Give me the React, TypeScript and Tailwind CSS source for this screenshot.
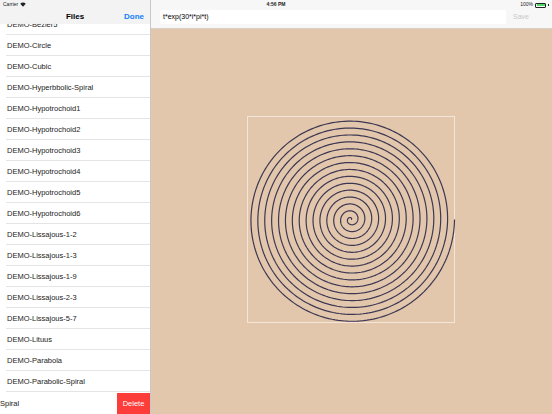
import React from "react";

const files = [
  "DEMO-Circle",
  "DEMO-Cubic",
  "DEMO-Hyperbbolic-Spiral",
  "DEMO-Hypotrochoid1",
  "DEMO-Hypotrochoid2",
  "DEMO-Hypotrochoid3",
  "DEMO-Hypotrochoid4",
  "DEMO-Hypotrochoid5",
  "DEMO-Hypotrochoid6",
  "DEMO-Lissajous-1-2",
  "DEMO-Lissajous-1-3",
  "DEMO-Lissajous-1-9",
  "DEMO-Lissajous-2-3",
  "DEMO-Lissajous-5-7",
  "DEMO-Lituus",
  "DEMO-Parabola",
  "DEMO-Parabolic-Spiral",
];

// t*exp(30*i*pi*t), t in [0,1]
function spiralPath(cx: number, cy: number, r: number) {
  const n = 3000;
  let d = "";
  for (let k = 0; k <= n; k++) {
    const t = k / n;
    const a = 30 * Math.PI * t;
    const x = cx + r * t * Math.cos(a);
    const y = cy - r * t * Math.sin(a);
    d += (k === 0 ? "M" : "L") + x.toFixed(2) + " " + y.toFixed(2);
  }
  return d;
}

function Row({ name }: { name: string }) {
  return (
    <div className="h-[21px] flex items-center pl-[7px] text-[7.5px] text-[#222] relative">
      {name}
      <div className="absolute left-[6px] right-0 bottom-0 h-px bg-[#e4e4e6]" />
    </div>
  );
}

export default function App() {
  return (
    <div
      className="w-[552px] h-[414px] flex overflow-hidden bg-white"
      style={{ fontFamily: '"Liberation Sans", Arial, sans-serif' }}
    >
      {/* Sidebar */}
      <div className="w-[151px] h-full relative border-r border-[#c8c8cc] overflow-hidden">
        <div className="absolute top-[14px] left-0 right-0">
          <Row name="DEMO-Bezier5" />
          {files.map((f) => (
            <Row key={f} name={f} />
          ))}
        </div>

        {/* swiped row */}
        <div className="absolute left-0 right-0 top-[393px] h-[21px] flex bg-white">
          <div className="flex-1 flex items-center text-[7.5px] text-[#222]">Spiral</div>
          <div className="w-[33px] bg-[#fc3d39] flex items-center justify-center text-[7.5px] text-white">
            Delete
          </div>
        </div>

        {/* nav bar */}
        <div className="absolute top-0 left-0 right-0 h-[24px] bg-[#f2f2f3]/[0.96]">
          <div className="h-[9px] flex items-center pl-[3px] text-[5px] text-[#222] gap-[2px]">
            Carrier
            <svg width="6" height="5" viewBox="0 0 12 9">
              <path d="M6 9 L0.5 3 A8 8 0 0 1 11.5 3 Z" fill="#222" />
            </svg>
          </div>
          <div className="h-[15px] flex items-center relative">
            <div className="absolute left-0 right-0 text-center text-[8px] font-bold text-black">Files</div>
            <div className="absolute right-[6px] text-[8px] font-semibold text-[#147efb]">Done</div>
          </div>
        </div>
      </div>

      {/* Main pane */}
      <div className="flex-1 flex flex-col bg-[#e2c7ad]">
        <div className="h-[29px] bg-[#f7f7f7] border-b border-[#d8d0c8] flex flex-col">
          <div className="h-[10px] relative flex items-center">
            <div className="absolute left-[-151px] w-[552px] text-center text-[5px] font-semibold text-[#222]">
              4:56 PM
            </div>
            <div className="ml-auto mr-[3px] flex items-center gap-[2px] text-[5px] text-[#222]">
              100%
              <div className="w-[11px] h-[5px] border-[0.5px] border-[#222] rounded-[1px] p-[0.5px]">
                <div className="w-full h-full bg-[#4cd964]" />
              </div>
              <div className="w-[1px] h-[2px] bg-[#222]" />
            </div>
          </div>
          <div className="flex items-center pl-[9px] pr-[10px] gap-[7px]">
            <div className="w-[346px] h-[14px] bg-white rounded-[2px] flex items-center pl-[3px] text-[7px] text-black">
              t*exp(30*i*pi*t)
            </div>
            <div className="text-[7px] text-[#c7c7cc]">Save</div>
          </div>
        </div>
        <div className="flex-1 flex items-center justify-center pb-[3px]">
          <svg width="209" height="208" viewBox="0 0 209 208">
            <rect x="0.5" y="0.5" width="207" height="206" fill="none" stroke="#f3e6d9" strokeWidth="1" />
            <path
              d={spiralPath(104, 103.5, 103.5)}
              fill="none"
              stroke="#3d3752"
              strokeWidth="1.2"
            />
          </svg>
        </div>
      </div>
    </div>
  );
}
